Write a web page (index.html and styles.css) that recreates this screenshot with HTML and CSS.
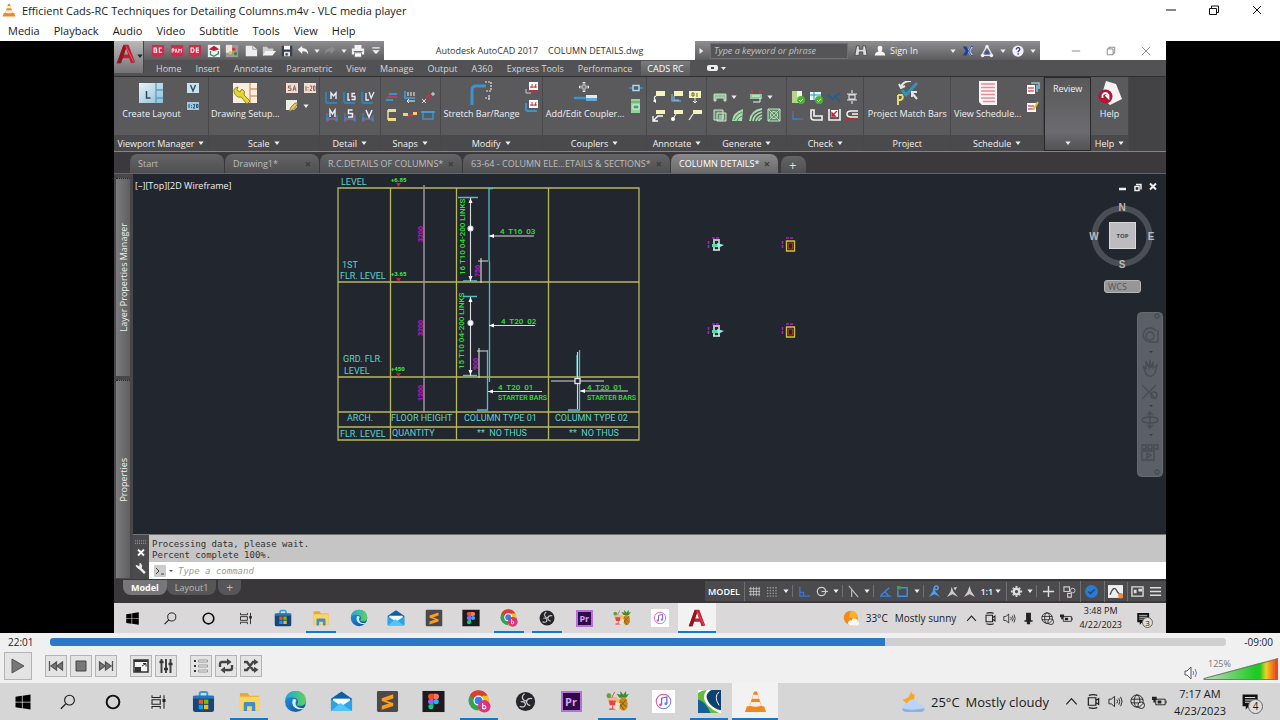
FILE: index.html
```html
<!DOCTYPE html>
<html lang="en">
<head>
<meta charset="utf-8">
<title>Efficient Cads-RC Techniques for Detailing Columns.m4v - VLC media player</title>
<link rel="stylesheet" href="styles.css">
</head>
<body>
<svg class="defs" aria-hidden="true">
  <defs>
    <linearGradient id="gEdge" x1="0" y1="0" x2="1" y2="1"><stop offset="0" stop-color="#1b9de2"/><stop offset=".5" stop-color="#1673c5"/><stop offset="1" stop-color="#0c4a8e"/></linearGradient>
    <linearGradient id="gEdge2" x1="0" y1="0" x2="1" y2="0"><stop offset="0" stop-color="#1fa7dc"/><stop offset="1" stop-color="#5fd35a"/></linearGradient>
    <linearGradient id="gMusic" x1="0" y1="0" x2="1" y2="1"><stop offset="0" stop-color="#f0506e"/><stop offset=".5" stop-color="#b45be0"/><stop offset="1" stop-color="#38a8f0"/></linearGradient>
    <linearGradient id="gSheet" x1="0" y1="0" x2="1" y2="1"><stop offset="0" stop-color="#e6f3f8"/><stop offset="1" stop-color="#8fc0d8"/></linearGradient>
  </defs>
  <symbol id="cone" viewBox="0 0 24 24"><path d="M3 17h18l2 6H1z" fill="#f08a1c"/><path d="M10.500 1.500h3L19 19q-7 3-14 0z" fill="#f4871a"/><path d="M9.500 5h5l1.200 4H8.300zM7.300 12.500h9.400l1.200 4q-5.900 2-11.800 0z" fill="#f3f0ec"/></symbol>
  <symbol id="win" viewBox="0 0 24 24"><path d="M2 5l8.500-1.200v7.700H2zM11.500 3.600L22 2v9.500H11.500zM2 12.500h8.500v7.700L2 19zM11.500 12.500H22V22l-10.500-1.600z"/></symbol>
  <symbol id="search" viewBox="0 0 24 24"><circle cx="14" cy="9.500" r="6.500" fill="none" stroke="currentColor" stroke-width="1.500"/><path d="M9.300 14.200L2.500 21" stroke="currentColor" stroke-width="1.700"/></symbol>
  <symbol id="ring" viewBox="0 0 24 24"><circle cx="12" cy="12" r="8.500" fill="none" stroke="#111" stroke-width="2.600"/></symbol>
  <symbol id="taskview" viewBox="0 0 24 24"><path d="M4 3v3h11V3M4 21v-3h11v3M4 9h11v6H4zM20 3v18" fill="none" stroke="#222" stroke-width="1.400"/><path d="M18 8h4v4h-4z" fill="#222"/></symbol>
  <symbol id="store" viewBox="0 0 24 24"><path d="M8 7V4q0-2 2-2h4q2 0 2 2v3" fill="none" stroke="#2b9fe0" stroke-width="2"/><rect x="1" y="6" width="22" height="17" rx="2.500" fill="#17467d"/><path d="M1 9V6h22v3z" fill="#2377b8"/><path d="M7 10h4.500v4.500H7z" fill="#f25022"/><path d="M12.500 10H17v4.500h-4.500z" fill="#7fba00"/><path d="M7 15.500h4.500V20H7z" fill="#00a4ef"/><path d="M12.500 15.500H17V20h-4.500z" fill="#ffb900"/></symbol>
  <symbol id="folder" viewBox="0 0 24 24"><path d="M2 3h8l2 3h10v15H2z" fill="#e9a92c"/><path d="M2 7h20v14H2z" fill="#fbd568"/><path d="M6 22v-8q0-1.500 1.500-1.500h9q1.500 0 1.500 1.500v8h-3.500v-5h-5v5z" fill="#3f8fc9"/></symbol>
  <symbol id="edge" viewBox="0 0 24 24"><circle cx="12" cy="12" r="11" fill="url(#gEdge)"/><path d="M1.200 10Q3 1 12 1q10 0 11 9.500 0 6-6 6-3.500 0-3.500-1.500c2-2 1.500-6-2-7Q5 6.500 1.200 10z" fill="url(#gEdge2)"/><path d="M9 10q-2 8 6 10 4 .5 6-1.500c-5 1-9-1-9-5q0-1.500 1-2.500-1.500-2.500-4-1z" fill="#dceefa"/></symbol>
  <symbol id="mail" viewBox="0 0 24 24"><path d="M1 9l11-7.500L23 9v12H1z" fill="#0f5ea8"/><path d="M3 9h18v8H3z" fill="#f4faff"/><path d="M1 9.500L12 17l11-7.500V22H1z" fill="#27a5e8"/><path d="M1 22l10-8.500 1 .8L23 22z" fill="#55c3f5"/></symbol>
  <symbol id="sublime" viewBox="0 0 24 24"><rect x="1" y="1" width="22" height="22" rx="1.500" fill="#4a4a4a"/><path d="M6 8.500l12-4v4.300l-7.500 2.400L18 13.500v3.300L6 20.500v-4l7.500-2.500L6 11.500z" fill="#ff9b1a"/></symbol>
  <symbol id="figma" viewBox="0 0 24 24"><rect x="0.500" y="1" width="23" height="22" fill="#1c1c1f"/><path d="M12 4H9a2.700 2.700 0 000 5.400h3z" fill="#f24e1e"/><path d="M12 4h3a2.700 2.700 0 010 5.400h-3z" fill="#ff7262"/><path d="M12 9.400H9a2.700 2.700 0 000 5.400h3z" fill="#a259ff"/><circle cx="14.700" cy="12.100" r="2.700" fill="#1abcfe"/><path d="M12 14.800H9a2.700 2.700 0 103 2.700z" fill="#0acf83"/></symbol>
  <symbol id="chrome" viewBox="0 0 24 24"><circle cx="11" cy="11" r="10.500" fill="#2fa552"/><path d="M2 5.500A10.500 10.500 0 0120.500 6H11q-4 1-4 5z" fill="#e33b2e"/><path d="M20.500 6A10.500 10.500 0 0110.500 21.500L15 12V6z" fill="#fbc116"/><circle cx="11" cy="11" r="5.300" fill="#fff"/><circle cx="11" cy="11" r="4" fill="#3a7de8"/><circle cx="17" cy="17" r="6.500" fill="#d8347c"/><path d="M15.300 13.500v6.500M15.300 17q1.700-1.500 3 0 1 2.500-1.500 2.800l-1.500-.5" fill="none" stroke="#fff" stroke-width="1.100"/></symbol>
  <symbol id="obs" viewBox="0 0 24 24"><circle cx="12" cy="12" r="10" fill="#26262a"/><path d="M11 4q-4 3-1 6.500 2 1.500 4 .5M19 9q-5-1-6 3 .5 4 4 4M6 17q5 2 6-2-1-4-5-2.500" fill="none" stroke="#c9c9cc" stroke-width="1.400"/></symbol>
  <symbol id="fruit" viewBox="0 0 24 24"><path d="M14 8l-3-4 4 1 0-4 3 4 3-4 0 4 3-1-3 4z" fill="#3c8c2c"/><ellipse cx="18" cy="14.500" rx="4.700" ry="7" fill="#c98b1d"/><path d="M14.500 11l7 7M15 17l6-7M14 14l5 7" stroke="#7a4c10" stroke-width=".9"/><path d="M2 8h9l-1 8H4z" fill="#e8443a"/><path d="M1 8h11l-1 3H2z" fill="#f6b2a0"/><circle cx="3" cy="6" r="2.500" fill="#58a83a"/><path d="M6 8L9 2M7 16v4H3.500h7" stroke="#d84a4a" fill="none"/><path d="M10 12l5 2-2 7-4-1z" fill="#e9e3cf"/><circle cx="12" cy="11" r="2" fill="#f2c432"/></symbol>
  <symbol id="music" viewBox="0 0 24 24"><rect width="24" height="24" fill="#fff"/><circle cx="12" cy="12" r="7.600" fill="none" stroke="url(#gMusic)" stroke-width="1.100"/><path d="M10 15.500V8.500l5.500-1.200v7" fill="none" stroke="#7e58d8" stroke-width="1.300"/><circle cx="8.900" cy="15.500" r="1.500" fill="#f0506e"/><circle cx="14.400" cy="14.300" r="1.500" fill="#4a8df0"/></symbol>
  <symbol id="acad" viewBox="0 0 24 24"><path d="M1 23L9 1h6l8 21-5 1-2-6H8l-2 6zM9.500 12.500h5L12 5z" fill="#c01f2f" fill-rule="evenodd"/><path d="M1 23L9 1l3 4-6 18z" fill="#8f1523"/><path d="M12 3l9 18" stroke="#f0606a" fill="none"/></symbol>
  <symbol id="swoosh" viewBox="0 0 24 24"><rect width="24" height="24" fill="#0d416f"/><path d="M0 0h14Q5 5 12 14q5 6 12 7v3H0z" fill="#fff"/><path d="M0 3Q4 0 9 0 3 8 10 16q5 5 12 8H0z" fill="#66bb3c"/><path d="M0 10q8 2 13 14H0z" fill="#155f96"/><path d="M22 2q-6 5 0 14" fill="none" stroke="#fff"/></symbol>
  <symbol id="suncloud" viewBox="0 0 24 24"><circle cx="11" cy="11" r="10" fill="#f08a1a"/><path d="M11 1a10 10 0 0110 10H8z" fill="#fab02c"/><path d="M9 21q-4-3 0-6 2-1 3 0 1-4 5-3t3 4q4 1 2 5-1 1-4 1z" fill="#fbf6f6"/></symbol>
  <symbol id="mooncloud" viewBox="0 0 24 24"><path d="M10 1q0 3 4 4l-1 5-8 4-4-4q8-1 9-9z" fill="#f6a91f"/><path d="M5 23q-5-1-4-5t5-4q2-5 7-4t5 5q6 0 6 4t-4 4z" fill="#b9d4f7"/><path d="M5 23q-5-1-4-4 8 3 23 0 0 4-4 4z" fill="#8ab2ea"/></symbol>
  <symbol id="caret" viewBox="0 0 16 16"><path d="M2.500 11L8 5l5.500 6" fill="none" stroke="#222" stroke-width="1.300"/></symbol>
  <symbol id="cam" viewBox="0 0 16 16"><path d="M3 1.500q5-1.500 9 0M3 14.500q5 1.500 9 0M2.500 4h8v8h-8zM10.500 7l3-2v6l-3-2" fill="none" stroke="#222" stroke-width="1.300"/></symbol>
  <symbol id="spk" viewBox="0 0 16 16"><path d="M1 5.500h2.500L7 2.500v11l-3.500-3H1zM9.500 6q1.200 2 0 4M11.500 4.500q2 3.500 0 7M13.500 3q3 5 0 10" fill="none" stroke="#222"/></symbol>
  <symbol id="mic" viewBox="0 0 16 16"><path d="M5 1h6v9H5zM3 10h10v2H3zM6 12h4v3H6z" fill="#222"/></symbol>
  <symbol id="globe" viewBox="0 0 16 16"><circle cx="7.500" cy="7.500" r="6.500" fill="none" stroke="#222"/><ellipse cx="7.500" cy="7.500" rx="3" ry="6.500" fill="none" stroke="#222"/><path d="M1 5.500h13M1 9.500h13" stroke="#222"/><circle cx="12" cy="12" r="3.500" fill="#ddd" stroke="#222"/><path d="M9.500 14.500l5-5" stroke="#222"/></symbol>
  <symbol id="bat" viewBox="0 0 16 16"><path d="M4 5.500h10v6H4zM15 7v3" fill="none" stroke="#222"/><path d="M6 7h4v3H6zM0 3h5v3.500H3.500V9h-2V6.500H0z" fill="#222"/></symbol>
  <symbol id="note" viewBox="0 0 24 24"><path d="M2 3h19v15H10l-4 4v-4H2z" fill="#111"/><path d="M5 7h13M5 10h13M5 13h8" stroke="#ddd" stroke-width="1.300"/></symbol>
  <symbol id="dn" viewBox="0 0 8 8"><path d="M0.500 2h7L4 6.500z" fill="currentColor"/></symbol>

  <symbol id="q1" viewBox="0 0 16 16"><path d="M1 1h14v13H9l-3 2-1-2H1z" fill="#d8274b"/><path d="M3.500 4.500h2.500v2.500l-1 0 1.500 0v2.500H3.500zM12.500 4.500h-3v5h3" stroke="#fff" stroke-width="1.200" fill="none"/></symbol>
  <symbol id="q2" viewBox="0 0 16 16"><path d="M1 1h14v13H9l-3 2-1-2H1z" fill="#d8274b"/><path d="M2.500 10V5.500h2V8H3M6 10l1-4.500 1.200 4.500M10 10V5.500l1.500 2 1.500-2V10" stroke="#fff" fill="none"/></symbol>
  <symbol id="q3" viewBox="0 0 16 16"><path d="M1 1h14v13H9l-3 2-1-2H1z" fill="#d8274b"/><path d="M3.500 4.500h2.500l1 2.500-1 2.500H3.500zM12.500 4.500h-3v5h3M9.500 7h3" stroke="#fff" stroke-width="1.200" fill="none"/></symbol>
  <symbol id="q4" viewBox="0 0 16 16"><rect x="1" y="1" width="14" height="14" fill="#eef2f0"/><path d="M2 6l6-4 6 4-6 2z" fill="#b5213c"/><path d="M4 8v4l4 2 5-3V8" fill="none" stroke="#3d8a70" stroke-width="1.500"/></symbol>
  <symbol id="q5" viewBox="0 0 16 16"><path d="M1 1h14v14H1z" fill="#9a9a98"/><path d="M1 1h7v9H1z" fill="#e7e7e2"/><circle cx="10" cy="6" r="2" fill="#e0342e"/><circle cx="6" cy="10" r="2" fill="#e8c22a"/><circle cx="12" cy="11" r="2" fill="#2f8a3c"/></symbol>
  <symbol id="new" viewBox="0 0 16 16"><path d="M2 2h8l5 4v8H2z" fill="#eee"/><path d="M10 2v4h5" fill="none" stroke="#999"/></symbol>
  <symbol id="open" viewBox="0 0 16 16"><path d="M1 3h5l1 2h6v3H5l-3 5H1z" fill="#ccc"/><path d="M4 8h12l-4 5H1z" fill="#f2f2f2"/></symbol>
  <symbol id="save" viewBox="0 0 16 16"><path d="M1 1h14v14H1z" fill="#3a3e48"/><path d="M4 1h8v5H4z" fill="#fff"/><path d="M4 9h8v6H4z" fill="#dfe4ee"/><path d="M6 11h3v3H6z" fill="#3a3e48"/></symbol>
  <symbol id="undo" viewBox="0 0 16 16"><path d="M1 6l6-5v3q8 0 8 9-2-5-8-4.500V12z" fill="#f2f2f2"/></symbol>
  <symbol id="redo" viewBox="0 0 16 16"><path d="M15 6L9 1v3q-8 0-8 9 2-5 8-4.500V12z" fill="#8b8b8b"/></symbol>
  <symbol id="print" viewBox="0 0 16 16"><path d="M4 1h8v4H4zM1 5h14v7H1z" fill="#f1f1f1"/><path d="M3 8.500h10" stroke="#555"/><path d="M4 10h8v5H4z" fill="#fff" stroke="#777"/></symbol>
  <symbol id="more" viewBox="0 0 16 16"><path d="M3 3h10v1.800H3zM3 7h10l-5 5z" fill="#f1f1f1"/></symbol>
  <symbol id="binoc" viewBox="0 0 16 16"><path d="M3 2h3v4h4V2h3l2 11h-5V9H6v4H1z" fill="#ddd" stroke="#444"/></symbol>
  <symbol id="user" viewBox="0 0 16 16"><path d="M8 1q4 0 3 5l-1 2.500q5 1 5 5.500H1q0-4.500 5-5.500L5 6Q4 1 8 1z" fill="#f4f4f4"/></symbol>
  <symbol id="exch" viewBox="0 0 16 16"><path d="M15 2h-4L7 8l4 6h4l-4-6z" fill="#a9c0f0"/><path d="M1 2h5l3 6-3 6H1l4-6z" fill="#1f3f9c"/><path d="M15 2h-3L9 8l3 6h3" fill="none" stroke="#1f3f9c"/></symbol>
  <symbol id="a360" viewBox="0 0 16 16"><path d="M8 2L14 13H2z" fill="none" stroke="#dfe6f2" stroke-width="1.500"/><circle cx="8" cy="3" r="2" fill="#eef"/><circle cx="3" cy="13" r="2" fill="#eef"/><circle cx="13" cy="13" r="2" fill="#eef"/><circle cx="8" cy="9.500" r="2" fill="#3352a5"/></symbol>
  <symbol id="help" viewBox="0 0 16 16"><circle cx="8" cy="8" r="7.500" fill="#f2f3fa"/><path d="M5.500 6q.5-2.500 2.700-2.500t2.300 2.200q0 1.300-2.300 3v1M8.200 11v2" fill="none" stroke="#2b3c9c" stroke-width="1.800"/></symbol>

  <symbol id="layout" viewBox="0 0 24 20"><path d="M0 0h24v20H0z" fill="url(#gSheet)"/><path d="M17 0v20M17 7h7M17 15h7" stroke="#5b9dbe" stroke-width="1.300"/><path d="M7.500 8v7h4" fill="none" stroke="#345" stroke-width="1.500"/></symbol>
  <symbol id="setup" viewBox="0 0 24 20"><path d="M0 0h24v20H0z" fill="#fbeedf"/><path d="M17 0v20M17 6h7M17 13h7" stroke="#d59a70" stroke-width="1.300"/><path d="M1 9q-1-4 4-5L4 7l3 2 2-3q4 2 2 6l6 6-3 3-6-7q-5 1-7-5z" fill="#e8d52a" stroke="#77701a" stroke-width=".8"/></symbol>
  <symbol id="vw" viewBox="0 0 14 14"><path d="M1 2h12v10H1z" fill="#c8e2ee"/><path d="M4.500 4L7 10l2.500-6" fill="none" stroke="#334d66" stroke-width="1.400"/></symbol>
  <symbol id="sc20" viewBox="0 0 14 14"><path d="M1 3h12v8H1z" fill="#9fcbe2"/><path d="M3 5v4M5.500 6v.8m0 1v1M7 5.500h1.700V7L7 9h2M10.500 5.500h1.500v3h-1.500z" stroke="#283f55" fill="none" stroke-width=".9"/></symbol>
  <symbol id="sa" viewBox="0 0 14 14"><path d="M1 2h12v10H1z" fill="#f2ddd3"/><path d="M6 5H3.500v2H6v2.500H3M8 10l1.500-5.500L11 10M8.500 8h2" fill="none" stroke="#88665a"/></symbol>
  <symbol id="s20" viewBox="0 0 14 14"><path d="M1 2h12v10H1z" fill="#f2ddd3"/><path d="M3 5v5M5 6v1M5 8.500v1M7 5h1.700v2L7 9.500h2M10.500 5h1.500v4.500h-1.500z" fill="none" stroke="#88665a"/></symbol>
  <symbol id="scl" viewBox="0 0 14 14"><path d="M1 1h11v7l-3 3H1z" fill="#efece4"/><path d="M4 13l2-5 4-4h3l-3 5z" fill="#e7c93c" stroke="#665" stroke-width=".7"/></symbol>
  <symbol id="dA" viewBox="0 0 14 14"><path d="M1 2v9q0 2 2 2h9" fill="none" stroke="#2a86bd" stroke-width="1.800"/><path d="M6 9V3l2.500 3L11 3v6" fill="none" stroke="#eef" stroke-width="1.400"/></symbol>
  <symbol id="dB" viewBox="0 0 14 14"><path d="M1 2v9q0 2 2 2h9" fill="none" stroke="#2a86bd" stroke-width="1.800"/><path d="M5 3v7h2M12 3.500H9v3h3v3H8.500" fill="none" stroke="#eef" stroke-width="1.300"/></symbol>
  <symbol id="dC" viewBox="0 0 14 14"><path d="M1 2v9q0 2 2 2h9" fill="none" stroke="#2a86bd" stroke-width="1.800"/><path d="M5 3v7h3M8 2l2.200 6L13 2" fill="none" stroke="#eef" stroke-width="1.300"/></symbol>
  <symbol id="dD" viewBox="0 0 14 14"><path d="M1 11h12M2 5v9M12 7v7" stroke="#3989bd" stroke-width="1.300"/><path d="M5 9V2l2.500 4L10 2v7" fill="none" stroke="#eef" stroke-width="1.400"/><path d="M3 9l2 2-2 2M11 9l-2 2 2 2" stroke="#d2455c" fill="none"/></symbol>
  <symbol id="dE" viewBox="0 0 14 14"><path d="M1 11h12M2 5v9M12 7v7" stroke="#3989bd" stroke-width="1.300"/><path d="M9.500 2h-4v3.500h4V9H5" fill="none" stroke="#eef" stroke-width="1.500"/><path d="M3 9l2 2-2 2M11 9l-2 2 2 2" stroke="#d2455c" fill="none"/></symbol>
  <symbol id="dF" viewBox="0 0 14 14"><path d="M1 11h12M2 5v9M12 7v7" stroke="#3989bd" stroke-width="1.300"/><path d="M5 2l3 7 3-7" fill="none" stroke="#eef" stroke-width="1.500"/><path d="M3 9l2 2-2 2M11 9l-2 2 2 2" stroke="#d2455c" fill="none"/></symbol>
  <symbol id="n1" viewBox="0 0 14 14"><path d="M4 4h8M1 10h7" stroke="#3c93cc" stroke-width="1.800"/><path d="M2 7h10" stroke="#c4415a" stroke-width="1.500"/></symbol>
  <symbol id="n2" viewBox="0 0 14 14"><path d="M2 1v7h10" fill="none" stroke="#3c93cc" stroke-width="2"/><path d="M5 2v4M8 2v4M11 2v4M4 11h8M6 9l-2 2 2 2" fill="none" stroke="#eee"/></symbol>
  <symbol id="n3" viewBox="0 0 14 14"><path d="M1 9l4 4M5 9l-4 4M10 4h4M12 2v4" stroke="#ddd"/><path d="M5 8l4-4v6" fill="none" stroke="#c4314a" stroke-width="1.500"/></symbol>
  <symbol id="n4" viewBox="0 0 14 14"><path d="M3 1h8v3H3zM3 10h8v3H3z" fill="#f0dc84"/><path d="M3 2v10" stroke="#f0dc84" stroke-width="1.500"/></symbol>
  <symbol id="n5" viewBox="0 0 14 14"><path d="M0 5h5v3H0zM10 4h4v3h-4z" fill="#f0d468"/><path d="M5 8l5-1" stroke="#d4344e" stroke-width="2"/></symbol>
  <symbol id="n6" viewBox="0 0 14 14"><path d="M2 4h10v7H2z" fill="none" stroke="#3c93cc" stroke-width="1.500"/><path d="M0 4h14" fill="none" stroke="#4ba2d8" stroke-width="1.500"/></symbol>
  <symbol id="stretch" viewBox="0 0 24 24"><path d="M2 24V9q0-4 4-4h10" fill="none" stroke="#3b93cf" stroke-width="3"/><path d="M15 1h6v9h-6M15 17h6M19 14v6" fill="none" stroke="#e4e4e4" stroke-width="1.200" stroke-dasharray="2 1"/></symbol>
  <symbol id="m1" viewBox="0 0 14 14"><path d="M4 1h9v8H4z" fill="#fff"/><path d="M7 7V3M10 7l1-4M5 6h7" stroke="#c82a3c"/><path d="M4 9h9v1.500H4z" fill="#c82a3c"/><path d="M1 8v4h5" stroke="#ccc" fill="none"/></symbol>
  <symbol id="m2" viewBox="0 0 14 14"><path d="M4 1h9v8H4z" fill="#fff"/><path d="M7 7V3M10 7l1-4M5 6h7" stroke="#c82a3c"/><path d="M1 4v6q0 2 2 2h9" stroke="#3b93cf" stroke-width="2" fill="none"/></symbol>
  <symbol id="coup" viewBox="0 0 24 24"><path d="M11 1v10M6 6h10" stroke="#eee" stroke-width="2.600"/><path d="M11 2v8M7 6h8" stroke="#555"/><path d="M1 17h14" stroke="#3b93cf" stroke-width="2.500"/><path d="M13 14h11v6H13z" fill="#dcebf4"/><path d="M13 17h11v3H13z" fill="#6ba7cf"/></symbol>
  <symbol id="c1" viewBox="0 0 14 14"><path d="M0 7h14" stroke="#3b93cf" stroke-width="1.500"/><path d="M4 4.500h6v5H4z" fill="#58595b" stroke="#a8d6f0" stroke-width="1.500"/></symbol>
  <symbol id="c2" viewBox="0 0 14 14"><path d="M2 0h9v14H2z" fill="#8fd69a"/><path d="M4 6h6v4H4z" fill="#4e9d66" stroke="#e2f6e4"/><path d="M2 3h9" stroke="#4e9d66"/></symbol>
  <symbol id="a1" viewBox="0 0 14 14"><path d="M4 1h9v5H4z" fill="#f4f3b8"/><path d="M4 6L2.500 7v5" stroke="#eee" stroke-width="1.300" fill="none"/><path d="M1 11l3-2v4z" fill="#fff"/></symbol>
  <symbol id="a2" viewBox="0 0 14 14"><path d="M4 1h9v5H4z" fill="#f4f3b8"/><path d="M2 4v7h9M4 6v4h5" stroke="#7fb4d6" stroke-width="1.200" fill="none"/></symbol>
  <symbol id="a3" viewBox="0 0 14 14"><path d="M1 1h12v7H1z" fill="#f4f3b8"/><path d="M4 3h2v3H4zM9 3v4" stroke="#66661f" fill="none"/><path d="M7 8v5M5 11l2 2 2-2" stroke="#eee" fill="none"/></symbol>
  <symbol id="a4" viewBox="0 0 14 14"><path d="M4 2h9v4H4z" fill="#f4f3b8"/><path d="M11 8H6l-4 4M1 8v5h5" stroke="#fff" fill="none" stroke-width="1.300"/></symbol>
  <symbol id="a5" viewBox="0 0 14 14"><path d="M4 2h9v4H4z" fill="#f4f3b8"/><path d="M6 6l-3 5" stroke="#eee"/><circle cx="3" cy="11" r="2" fill="#fff"/></symbol>
  <symbol id="a6" viewBox="0 0 14 14"><path d="M5 2h9v4H5z" fill="#f4f3b8"/><path d="M5 6l-4 6" stroke="#eee" stroke-width="1.300"/></symbol>
  <symbol id="g1" viewBox="0 0 14 14"><path d="M1 4h12v7h-2V8H3v3H1z" fill="#8fc79b" stroke="#d6eed8" stroke-width=".8"/></symbol>
  <symbol id="g2" viewBox="0 0 14 14"><path d="M1 4h12v5H1z" fill="#8fc79b"/><path d="M3 0v4M11 0v4" stroke="#cf3a46" stroke-width="1.500"/><path d="M3 6h8M4 12h7V8" stroke="#e8f5e9" fill="none"/></symbol>
  <symbol id="g3" viewBox="0 0 14 14"><path d="M1 2h9v10H1zM4 5h9v8H4z" fill="#6b8a70" stroke="#cfe9d2"/><path d="M6 8h5M6 10h5" stroke="#cfe9d2"/></symbol>
  <symbol id="g4" viewBox="0 0 14 14"><path d="M1 13Q2 4 12 1l-1 12z" fill="#a6dcae"/><path d="M3 12q2-6 8-8M6 13q1-4 5-5" stroke="#4e8a5c" fill="none"/></symbol>
  <symbol id="g5" viewBox="0 0 14 14"><path d="M1 13Q2 3 13 1M4 13q1-7 9-9M7 13q1-4 6-6M10 13q0-2 3-3" fill="none" stroke="#a6dcae" stroke-width="1.800"/></symbol>
  <symbol id="g6" viewBox="0 0 14 14"><path d="M1 1h12v12H1z" fill="#5e8a67" stroke="#bfe7c4"/><circle cx="7" cy="7" r="3.500" fill="none" stroke="#cbeecf"/><path d="M1 1l12 12M13 1L1 13" stroke="#bfe7c4" stroke-width=".8"/></symbol>
  <symbol id="k1" viewBox="0 0 14 14"><path d="M1 1h10v12H1z" fill="#eff5e2"/><path d="M1 1h5v12H1z" fill="#b6d48a"/><circle cx="10" cy="10" r="4" fill="#4fb33a"/><path d="M8 10l1.500 1.500L12 9" stroke="#fff" fill="none"/></symbol>
  <symbol id="k2" viewBox="0 0 14 14"><path d="M1 2h11v8H1z" fill="#dff"/><path d="M1 5h11M5 2v8" stroke="#3b88b8"/><circle cx="10" cy="10" r="4" fill="#4fb33a"/><path d="M8 10l1.500 1.500L12 9" stroke="#fff" fill="none"/></symbol>
  <symbol id="k3" viewBox="0 0 14 14"><path d="M1 5l6 5M6 8l7-5M9 7l4 5" stroke="#1f5f92" stroke-width="1.800"/></symbol>
  <symbol id="k4" viewBox="0 0 14 14"><path d="M2 4h10M2 10h10M7 0v3M7 11v3M4 5h6v4H4z" fill="none" stroke="#ddd" stroke-width="1.200"/></symbol>
  <symbol id="k5" viewBox="0 0 14 14"><path d="M2 3v8h10" fill="none" stroke="#2f7fb5" stroke-width="1.800"/><path d="M2 3v4M9 11h4" stroke="#c03a4b"/></symbol>
  <symbol id="k6" viewBox="0 0 14 14"><path d="M2 2h3v6h8v4H5q-3 0-3-3z" fill="none" stroke="#f4f4f4" stroke-width="1.600"/></symbol>
  <symbol id="k7" viewBox="0 0 14 14"><path d="M2 1v11h11V1" fill="none" stroke="#f4f4f4" stroke-width="1.600"/><path d="M4 2h7v7H4z" fill="#fff"/><path d="M5 8V5l3 3zM7 6l3-3" stroke="#c23" stroke-width="1.400"/></symbol>
  <symbol id="k8" viewBox="0 0 14 14"><path d="M13 3H6q-4 0-4 3t4 3h7M13 6H7" fill="none" stroke="#f4f4f4" stroke-width="1.500"/><path d="M4 11h9M1 13l3-3" stroke="#c23" stroke-width="1.400"/></symbol>
  <symbol id="match" viewBox="0 0 24 24"><path d="M3 14v10M3 14h4q2 3-1 5H3" fill="none" stroke="#e3da6a" stroke-width="2"/><path d="M22 2L11 14l-4-5" fill="none" stroke="#2f93bf" stroke-width="3"/><path d="M16 0Q8 0 6 6M4 3l2 4 4-2M22 18l-5-6M17 16v-5h5" fill="none" stroke="#e6e6e6" stroke-width="2"/></symbol>
  <symbol id="sched" viewBox="0 0 24 24"><path d="M3 0h18v24H6l-3-3z" fill="#fbf4f4"/><path d="M5 3h14M5 6.500h14M5 10h14M5 13.500h14M5 17h14M7 20.500h12" stroke="#e58b96" stroke-width="1.700"/></symbol>
  <symbol id="s1" viewBox="0 0 14 14"><path d="M1 4h8v9H1z" fill="#fff"/><path d="M2 7h6M2 10h6" stroke="#d8606d" stroke-width="1.500"/><path d="M5 2h8v6M11 4v7" stroke="#8cc2dd" fill="none" stroke-width="1.500"/></symbol>
  <symbol id="s2" viewBox="0 0 14 14"><path d="M1 4h9v9H1z" fill="#fff"/><path d="M2 7h6M2 10h6" stroke="#d8606d" stroke-width="1.500"/><path d="M12 3l-5 8" stroke="#e4bd51" stroke-width="2"/></symbol>
  <symbol id="helpbig" viewBox="0 0 24 24"><path d="M8 0l10 3 6 15-12 6-9-8z" fill="#f5f2f3"/><circle cx="7.500" cy="15.500" r="7" fill="#b31632"/><path d="M4.500 17v-3q3-4 6 0v3l-3-3" fill="none" stroke="#fff" stroke-width="1.800"/></symbol>

  <symbol id="play" viewBox="0 0 16 16"><path d="M2 1l12 7-12 7z" fill="#777" stroke="#555"/></symbol>
  <symbol id="prev" viewBox="0 0 16 16"><path d="M1.500 3v10M8.500 4v8L3 8zM14.500 4v8L9 8z" fill="#777" stroke="#555" stroke-width="1.300"/></symbol>
  <symbol id="stop" viewBox="0 0 16 16"><path d="M3 3h10v10H3z" fill="#777" stroke="#444"/></symbol>
  <symbol id="next" viewBox="0 0 16 16"><path d="M14.500 3v10M7.500 4v8L13 8zM1.500 4v8L7 8z" fill="#777" stroke="#555" stroke-width="1.300"/></symbol>
  <symbol id="full" viewBox="0 0 16 16"><path d="M1 2h14v12H1z" fill="#f4f4f4" stroke="#333" stroke-width="1.500"/><path d="M1 2h14v2H1zM2 9h6v5H2z" fill="#333"/><path d="M9 8l4-2.500M10 5.500h3v3" fill="none" stroke="#333"/></symbol>
  <symbol id="eq" viewBox="0 0 16 16"><path d="M3.500 1v14M8 1v14M12.500 1v14" stroke="#444" stroke-width="2"/><path d="M1.500 4h4M6 11h4M10.500 6h4" stroke="#333" stroke-width="2.500"/></symbol>
  <symbol id="list" viewBox="0 0 16 16"><path d="M1 3h2M1 8h2M1 13h2" stroke="#333" stroke-width="2"/><path d="M5.500 2h9v2h-9zM5.500 7h9v2h-9zM5.500 12h9v2h-9z" fill="#eee" stroke="#888" stroke-width=".8"/></symbol>
  <symbol id="loop" viewBox="0 0 16 16"><path d="M2 9V6q0-2 2-2h6M14 7v3q0 2-2 2H6" fill="none" stroke="#444" stroke-width="2.400"/><path d="M9 .5L13.500 4 9 7.500zM7 8.500L2.500 12 7 15.500z" fill="#444"/></symbol>
  <symbol id="shuf" viewBox="0 0 16 16"><path d="M1 4h3l6 8h2M1 12h3l6-8h2" fill="none" stroke="#444" stroke-width="2.400"/><path d="M11 1l4.500 3L11 7.200zM11 8.800l4.500 3L11 15z" fill="#444"/></symbol>
</svg>

<header>
  <div class="title-bar">
    <svg class="i14"><use href="#cone"/></svg>
    <h1>Efficient Cads-RC Techniques for Detailing Columns.m4v - VLC media player</h1>
    <div class="win-controls">
      <button aria-label="Minimize"><svg class="i12" viewBox="0 0 12 12"><path d="M1 6h10" stroke="#111"/></svg></button>
      <button aria-label="Restore"><svg class="i12" viewBox="0 0 12 12"><path d="M1.500 4.500h7v6h-7zM3.500 4V2h7v6.500h-2" fill="none" stroke="#111"/></svg></button>
      <button aria-label="Close"><svg class="i12" viewBox="0 0 12 12"><path d="M2 2l8 8M10 2l-8 8" stroke="#111"/></svg></button>
    </div>
  </div>
  <nav class="menu-bar">
    <button>Media</button><button>Playback</button><button>Audio</button><button>Video</button><button>Subtitle</button><button>Tools</button><button>View</button><button>Help</button>
  </nav>
</header>

<main class="video">
  <div class="acad">
    <div class="acad-head">
      <button class="app-button" aria-label="Application menu"><svg class="app-logo"><use href="#acad"/></svg><svg class="arrow dark"><use href="#dn"/></svg></button>
      <div class="acad-head-main">
        <div class="acad-title">
          <div class="qat">
            <svg class="i14"><use href="#q1"/></svg><svg class="i14"><use href="#q2"/></svg><svg class="i14"><use href="#q3"/></svg><svg class="i14"><use href="#q4"/></svg><svg class="i14"><use href="#q5"/></svg><svg class="i14"><use href="#new"/></svg><svg class="i14"><use href="#open"/></svg><svg class="i12"><use href="#save"/></svg><svg class="i12"><use href="#undo"/></svg><svg class="arrow"><use href="#dn"/></svg><svg class="i12"><use href="#redo"/></svg><svg class="arrow"><use href="#dn"/></svg><svg class="i14"><use href="#print"/></svg><svg class="i12"><use href="#more"/></svg>
          </div>
          <div class="doc-name"><span>Autodesk AutoCAD 2017</span><span>COLUMN DETAILS.dwg</span></div>
          <div class="info-center">
            <svg class="arrow side" viewBox="0 0 8 8"><path d="M2 0l5 4-5 4z" fill="#eee"/></svg>
            <input class="keyword" type="text" aria-label="Search help" placeholder="Type a keyword or phrase">
            <svg class="i14"><use href="#binoc"/></svg>
            <button class="sign-in"><svg class="i12"><use href="#user"/></svg>Sign In</button>
            <svg class="arrow"><use href="#dn"/></svg><svg class="i12"><use href="#exch"/></svg><svg class="i14"><use href="#a360"/></svg><svg class="arrow"><use href="#dn"/></svg><svg class="i12 spaced"><use href="#help"/></svg><svg class="arrow"><use href="#dn"/></svg>
          </div>
          <div class="doc-controls">
            <svg class="i10" viewBox="0 0 12 12"><path d="M1 6h10" stroke="#777"/></svg>
            <svg class="i10" viewBox="0 0 12 12"><path d="M1.500 3.500h7v7h-7zM3.500 3.500v-2h7v7h-2" fill="none" stroke="#777"/></svg>
            <svg class="i10" viewBox="0 0 12 12"><path d="M1 1l10 10M11 1L1 11" stroke="#777"/></svg>
          </div>
        </div>
        <nav class="ribbon-tabs">
          <button>Home</button><button>Insert</button><button>Annotate</button><button>Parametric</button><button>View</button><button>Manage</button><button>Output</button><button>A360</button><button>Express Tools</button><button>Performance</button><button class="current">CADS RC</button>
          <svg class="ribbon-toggle" viewBox="0 0 20 8"><rect x="1" y="1" width="11" height="6" rx="2" fill="#eee"/><path d="M5 4h3" stroke="#444" stroke-width="2"/><path d="M15 3h5l-2.500 3z" fill="#eee"/></svg>
        </nav>
      </div>
    </div>

    <div class="ribbon">
      <section class="panel"><div class="tools">
        <button class="big"><svg><use href="#layout"/></svg>Create Layout</button>
        <div class="side-icons"><svg class="i14"><use href="#vw"/></svg><svg class="i14"><use href="#sc20"/></svg></div>
      </div><h2>Viewport Manager<svg class="arrow"><use href="#dn"/></svg></h2></section>
      <section class="panel"><div class="tools">
        <button class="big"><svg><use href="#setup"/></svg>Drawing Setup...</button>
        <div class="side-icons two"><svg class="i14"><use href="#sa"/></svg><svg class="i14"><use href="#s20"/></svg><svg class="i14"><use href="#scl"/></svg><svg class="arrow"><use href="#dn"/></svg></div>
      </div><h2>Scale<svg class="arrow"><use href="#dn"/></svg></h2></section>
      <section class="panel"><div class="tools small three">
        <svg class="i14"><use href="#dA"/></svg><svg class="i14"><use href="#dB"/></svg><svg class="i14"><use href="#dC"/></svg><svg class="i14"><use href="#dD"/></svg><svg class="i14"><use href="#dE"/></svg><svg class="i14"><use href="#dF"/></svg>
      </div><h2>Detail<svg class="arrow"><use href="#dn"/></svg></h2></section>
      <section class="panel"><div class="tools small three">
        <svg class="i14"><use href="#n1"/></svg><svg class="i14"><use href="#n2"/></svg><svg class="i14"><use href="#n3"/></svg><svg class="i14"><use href="#n4"/></svg><svg class="i14"><use href="#n5"/></svg><svg class="i14"><use href="#n6"/></svg>
      </div><h2>Snaps<svg class="arrow"><use href="#dn"/></svg></h2></section>
      <section class="panel"><div class="tools">
        <button class="big"><svg><use href="#stretch"/></svg>Stretch Bar/Range</button>
        <div class="side-icons"><svg class="i14"><use href="#m1"/></svg><svg class="i14"><use href="#m2"/></svg></div>
      </div><h2>Modify<svg class="arrow"><use href="#dn"/></svg></h2></section>
      <section class="panel"><div class="tools">
        <button class="big"><svg><use href="#coup"/></svg>Add/Edit Coupler...</button>
        <div class="side-icons"><svg class="i14"><use href="#c1"/></svg><svg class="i14"><use href="#c2"/></svg></div>
      </div><h2>Couplers<svg class="arrow"><use href="#dn"/></svg></h2></section>
      <section class="panel"><div class="tools small three">
        <svg class="i14"><use href="#a1"/></svg><svg class="i14"><use href="#a2"/></svg><svg class="i14"><use href="#a3"/></svg><svg class="i14"><use href="#a4"/></svg><svg class="i14"><use href="#a5"/></svg><svg class="i14"><use href="#a6"/></svg>
      </div><h2>Annotate<svg class="arrow"><use href="#dn"/></svg></h2></section>
      <section class="panel"><div class="tools small four">
        <svg class="i14"><use href="#g1"/></svg><svg class="arrow"><use href="#dn"/></svg><svg class="i14"><use href="#g2"/></svg><svg class="arrow"><use href="#dn"/></svg><svg class="i14"><use href="#g3"/></svg><svg class="i14"><use href="#g4"/></svg><svg class="i14"><use href="#g5"/></svg><svg class="i14"><use href="#g6"/></svg>
      </div><h2>Generate<svg class="arrow"><use href="#dn"/></svg></h2></section>
      <section class="panel"><div class="tools small four">
        <svg class="i14"><use href="#k1"/></svg><svg class="i14"><use href="#k2"/></svg><svg class="i14"><use href="#k3"/></svg><svg class="i14"><use href="#k4"/></svg><svg class="i14"><use href="#k5"/></svg><svg class="i14"><use href="#k6"/></svg><svg class="i14"><use href="#k7"/></svg><svg class="i14"><use href="#k8"/></svg>
      </div><h2>Check<svg class="arrow"><use href="#dn"/></svg></h2></section>
      <section class="panel"><div class="tools">
        <button class="big"><svg><use href="#match"/></svg>Project Match Bars</button>
      </div><h2>Project</h2></section>
      <section class="panel"><div class="tools">
        <button class="big"><svg><use href="#sched"/></svg>View Schedule...</button>
        <div class="side-icons"><svg class="i14"><use href="#s1"/></svg><svg class="i14"><use href="#s2"/></svg></div>
      </div><h2>Schedule<svg class="arrow"><use href="#dn"/></svg></h2></section>
      <section class="panel review"><button>Review</button><svg class="arrow"><use href="#dn"/></svg></section>
      <section class="panel"><div class="tools">
        <button class="big"><svg><use href="#helpbig"/></svg>Help</button>
      </div><h2>Help<svg class="arrow"><use href="#dn"/></svg></h2></section>
      <div class="ribbon-rest"></div>
    </div>

    <nav class="file-tabs">
      <button class="t-start">Start</button>
      <button class="t-drawing">Drawing1*<span>×</span></button>
      <button class="t-rc">R.C.DETAILS OF COLUMNS*<span>×</span></button>
      <button class="t-ele">63-64 - COLUMN ELE...ETAILS &amp; SECTIONS*<span>×</span></button>
      <button class="t-col current">COLUMN DETAILS*<span>×</span></button>
      <button class="t-add" aria-label="New drawing">+</button>
    </nav>

    <div class="workspace">
      <aside class="rail">
        <div><span>Layer Properties Manager</span></div>
        <div><span>Properties</span></div>
      </aside>
      <div class="work-main">
        <div class="canvas">
          <svg class="drawing" viewBox="133 174 720 360">
            <g fill="none" stroke="#b9b75e" stroke-width="1.300">
              <path d="M338 188h301v252H338zM338 282h301M338 377h301M338 412h301M338 427h301M390.500 188v252M456.500 188v252M548.500 188v252"/>
            </g>
            <path d="M424 185v228" stroke="#9c93a2" stroke-width="1.500"/>
            <g fill="none" stroke="#54bfc3" stroke-width="1.300">
              <path d="M493 188.500h-4V260l.5 2v120M487.500 350v60H477M458 197.500h20M463 281h14M463 296.500h14M463 375.500h14M577 355v22M579.500 350v60H568"/>
            </g>
            <g stroke="#dcdce0" fill="#fff" stroke-width="1.100">
              <path d="M470.500 198v83M470.500 297v79M489 236h45M489 325.500h46M488 391.500h54M580 391h48M481 258v25M478 261h10M479 348v30M477 351h10" fill="none"/>
              <path d="M468.500 203l2-5 2 5zM468.500 276l2 5 2-5zM468.500 302l2-5 2 5zM468.500 370l2 5 2-5zM494 234l-5 2 5 2zM494 323.500l-5 2 5 2zM493 389.500l-5 2 5 2zM585 389l-5 2 5 2z" stroke="none"/>
              <circle cx="470.500" cy="228.500" r="2.500"/><circle cx="470.500" cy="323" r="2.500"/>
            </g>
            <path d="M551 381h53M577.500 352v57" stroke="#d7d9dc" stroke-width="1.100"/><rect x="575" y="378.500" width="5" height="5" fill="#22262f" stroke="#e8e8e8" stroke-width="1.300"/>
            <path d="M396 183h5l-2.500 4zM396 278h5l-2.500 4zM396 373h5l-2.500 4z" fill="#c2262d"/>
            <g class="cad cyan">
              <text x="341" y="185">LEVEL</text><text x="342" y="268">1ST</text><text x="340" y="279">FLR. LEVEL</text><text x="343" y="362">GRD. FLR.</text><text x="344" y="374">LEVEL</text>
              <text x="347" y="421">ARCH.</text><text x="391" y="421">FLOOR HEIGHT</text><text x="464" y="421">COLUMN TYPE 01</text><text x="555" y="421">COLUMN TYPE 02</text>
              <text x="340" y="437">FLR. LEVEL</text><text x="392" y="436">QUANTITY</text><text x="477" y="436">**&#160; NO THUS</text><text x="569" y="436">**&#160; NO THUS</text>
            </g>
            <g class="cad green">
              <text x="500" y="234">4&#160; T16&#160; 03</text><text x="501" y="324">4&#160; T20&#160; 02</text><text x="498" y="390">4&#160; T20&#160; 01</text><text x="587" y="390">4&#160; T20&#160; 01</text>
              <text transform="translate(465 275) rotate(-90)">16 T10 04-200 LINKS</text><text transform="translate(464 369) rotate(-90)">15 T10 04-200 LINKS</text>
            </g>
            <g class="cad starter"><text x="498" y="400">STARTER BARS</text><text x="587" y="400">STARTER BARS</text></g>
            <g class="cad level"><text x="391" y="182">+6.85</text><text x="391" y="276">+3.65</text><text x="391" y="371">+450</text></g>
            <g class="cad dim">
              <text transform="translate(423 242) rotate(-90)">3200</text><text transform="translate(423 336) rotate(-90)">3200</text><text transform="translate(423 401) rotate(-90)">1200</text><text transform="translate(480 277) rotate(-90)">750</text><text transform="translate(478 370) rotate(-90)">900</text>
            </g>
            <g id="sections">
              <path d="M712 238h8M708.500 241v8M786 238h8M782.500 241v8" stroke="#b21cc0" stroke-width="1.500" stroke-dasharray="3 1"/>
              <path d="M713 240h7M713 250h7M714 241v3M719 241v3M714 247v3M719 247v3" stroke="#d8f3ea" stroke-width="1.500"/><path d="M712 244h8v3h-8z" fill="#4ee0a2"/><path d="M717 243l7 2-6 3z" fill="#9fe6f0"/>
              <path d="M786.500 241h8v10h-8z" fill="none" stroke="#d0c33c" stroke-width="1.300"/><path d="M788.500 243h4v6h-4z" fill="none" stroke="#b5412c" stroke-width=".8"/>
            </g>
            <use href="#sections" y="86"/>
          </svg>
          <span class="view-label">[–][Top][2D Wireframe]</span>
          <div class="view-tools">
            <svg class="view-nav" viewBox="1080 174 86 360">
              <path d="M1119 189h7" stroke="#eee" stroke-width="2.500"/><path d="M1135 186.500h4v4h-4zM1136 184.500h5v5" fill="none" stroke="#eee" stroke-width="1.500"/><path d="M1150 183.500l6 6M1156 183.500l-6 6" stroke="#eee" stroke-width="2"/>
              <circle cx="1122" cy="236" r="27.500" fill="none" stroke="#4b4e55" stroke-width="6"/>
              <rect x="1109.500" y="222.500" width="26" height="26" fill="#bcbcc0" stroke="#d8d8d8"/><text class="cube" x="1122.500" y="238" text-anchor="middle">TOP</text>
              <g class="compass" text-anchor="middle"><text x="1122" y="211">N</text><text x="1122" y="268">S</text><text x="1094" y="240">W</text><text x="1151" y="240">E</text></g>
              <rect x="1137.500" y="312.500" width="25" height="164" rx="4" fill="#5b5f66" stroke="#666a70"/>
              <g fill="none" stroke="#474b52" stroke-width="1.300"><circle cx="1150" cy="336" r="4"/><path d="M1158 330v12h-8a7 7 0 116-11M1143 366l3 8q5 5 9-1l2-8-4 3v-6l-2 6-1-8-1 8-3-7v8zM1142 385l14 14M1156 385l-14 14"/><circle cx="1154" cy="395" r="3"/><path d="M1150 412v16M1147 415l3-3 3 3M1147 425l3 3 3-3"/><ellipse cx="1150" cy="420" rx="8" ry="3"/><path d="M1142 445h4v4h-4zM1148 445h4v4h-4zM1154 445h4v4h-4zM1142 451h12v9h-12zM1147 453l4 2-4 3z"/><circle cx="1157" cy="316" r="2"/><circle cx="1157" cy="472" r="2"/></g>
              <path d="M1149 351h4l-2 2zM1149 405h4l-2 2zM1149 434h4l-2 2z" fill="#34383f"/>
            </svg>
            <button class="wcs">WCS</button>
          </div>
        </div>
        <div class="command">
          <div class="command-grip"><svg viewBox="0 0 16 45"><path d="M2 6h12M2 8.500h12" stroke="#aaa" stroke-dasharray="1 1"/><path d="M5 15l6 6M11 15l-6 6" stroke="#fff" stroke-width="2"/><path d="M6 33l6 6" stroke="#eee" stroke-width="2.500"/><path d="M3 31q1 4 5 3 2-3-1-5v3H5z" fill="#eee" stroke="#eee"/></svg></div>
          <div class="command-body">
            <p>Processing data, please wait.<br>Percent complete 100%.</p>
            <label class="prompt"><svg class="prompt-icon" viewBox="0 0 20 12"><rect x="0" y="0" width="12" height="12" rx="1" fill="#ccc"/><path d="M2 3l3 3-3 3M7 9h3" fill="none" stroke="#444"/><path d="M15 5h4l-2 2z" fill="#555"/></svg><input type="text" aria-label="Command" placeholder="Type a command"></label>
          </div>
        </div>
      </div>
    </div>

    <div class="acad-foot">
      <nav class="layout-tabs"><button class="current">Model</button><button>Layout1</button><button class="plus" aria-label="New layout">+</button></nav>
      <div class="status-bar">
        <button class="w-model">MODEL</button>
        <svg class="w-m line-left" viewBox="0 0 14 14"><path d="M3 2v10M6 2v10M9 2v10M12 2v10M1 4h12M1 7h12M1 10h12" stroke="#c4c4c4" stroke-width=".9"/></svg>
        <svg class="w-m" viewBox="0 0 14 14"><path d="M1 3h12M1 6h12M1 9h12M1 12h12" stroke="#999" stroke-width="1.500" stroke-dasharray="1.500 1.500"/></svg>
        <svg class="arrow line"><use href="#dn"/></svg>
        <svg class="w-m" viewBox="0 0 14 14"><path d="M2 2v10h11M2 8h4v4" fill="none" stroke="#3a76d0" stroke-width="1.400"/></svg>
        <svg class="w-m" viewBox="0 0 14 14"><circle cx="7" cy="7" r="4.500" fill="none" stroke="#ccc" stroke-width="1.300"/><path d="M7 7h7" stroke="#ccc" stroke-width="1.300"/></svg>
        <svg class="arrow line"><use href="#dn"/></svg>
        <svg class="w-m" viewBox="0 0 14 14"><path d="M2 1l10 12M5 4v9" stroke="#bbb" stroke-width="1.300"/></svg>
        <svg class="arrow line"><use href="#dn"/></svg>
        <svg class="w-m" viewBox="0 0 14 14"><path d="M1 12h12M2 11l9-8M6 7l4 4" fill="none" stroke="#3a86e0" stroke-width="1.500"/></svg>
        <svg class="w-m" viewBox="0 0 14 14"><path d="M4 3h8v9H2V6" fill="none" stroke="#4190e6" stroke-width="1.600"/><path d="M1 1h4v4H1z" fill="#3f9d5b"/></svg>
        <svg class="arrow line"><use href="#dn"/></svg>
        <svg class="w-m" viewBox="0 0 14 14"><path d="M6 2l2 5 5 6-6-3-6 3 4-6z" fill="#4e9df0"/><circle cx="9" cy="3" r="2" fill="none" stroke="#4e9df0" stroke-width="1.500"/></svg>
        <svg class="w-m" viewBox="0 0 14 14"><path d="M6 2l2 5 5 6-6-3-6 3 4-6zM8 3l4-1-2 4z" fill="#ccc"/></svg>
        <svg class="w-m" viewBox="0 0 14 14"><path d="M7 1l2 6 4 6-6-3-6 3 4-6z" fill="#ccc"/></svg>
        <button class="w-ratio">1:1<svg class="arrow"><use href="#dn"/></svg></button>
        <svg class="w-m line-left" viewBox="0 0 14 14"><circle cx="7" cy="7" r="3" fill="none" stroke="#ddd" stroke-width="2.500"/><path d="M7 1v2M7 11v2M1 7h2M11 7h2M3 3l1 1M10 10l1 1M11 3l-1 1M4 10l-1 1" stroke="#ddd" stroke-width="2"/></svg>
        <svg class="arrow line"><use href="#dn"/></svg>
        <svg class="w-m" viewBox="0 0 14 14"><path d="M7 1v12M1 7h12" stroke="#ddd" stroke-width="1.500"/></svg>
        <svg class="w-m line-left" viewBox="0 0 14 14"><path d="M1 2h6v5H1zM5 9h4v4H5z" fill="none" stroke="#ccc" stroke-width="1.200"/><circle cx="10.500" cy="6" r="2.500" fill="none" stroke="#ccc"/></svg>
        <svg class="w-l line-left" viewBox="0 0 14 14"><circle cx="7" cy="7" r="6" fill="#2e7ad0"/><path d="M4 7l2 2 4-4" fill="none" stroke="#174b8b" stroke-width="1.500"/></svg>
        <svg class="w-l line-left" viewBox="0 0 14 14"><path d="M0 1h14v12H0z" fill="#eee"/><path d="M2 10q3-9 6-4 2 4 4 3" fill="none" stroke="#555" stroke-width="1.300"/><circle cx="12" cy="11" r="2.500" fill="#f08a3a"/></svg>
        <svg class="w-m line-left" viewBox="0 0 14 14"><path d="M1 2h12v10H1z" fill="none" stroke="#ddd" stroke-width="1.500"/><path d="M3 5h3v4H3zM8 4h4v3H8z" fill="#ddd"/></svg>
        <svg class="w-m" viewBox="0 0 14 14"><path d="M1 3h12M1 7h12M1 11h12" stroke="#ddd" stroke-width="1.500"/></svg>
      </div>
    </div>

    <div class="taskbar inner">
      <div class="apps">
        <button aria-label="Start"><svg><use href="#win"/></svg></button><button aria-label="Search"><svg><use href="#search"/></svg></button><button aria-label="Cortana"><svg><use href="#ring"/></svg></button><button aria-label="Task view"><svg><use href="#taskview"/></svg></button><button aria-label="Store"><svg><use href="#store"/></svg></button><button class="open" aria-label="File Explorer"><svg><use href="#folder"/></svg></button><button aria-label="Edge"><svg><use href="#edge"/></svg></button><button aria-label="Mail"><svg><use href="#mail"/></svg></button><button aria-label="Sublime Text"><svg><use href="#sublime"/></svg></button><button aria-label="Figma"><svg><use href="#figma"/></svg></button><button class="open" aria-label="Chrome"><svg><use href="#chrome"/></svg></button><button class="open" aria-label="OBS"><svg><use href="#obs"/></svg></button><button><span class="pr">Pr</span></button><button aria-label="Game"><svg><use href="#fruit"/></svg></button><button aria-label="iTunes"><svg><use href="#music"/></svg></button><button class="active" aria-label="AutoCAD"><svg><use href="#acad"/></svg></button>
      </div>
      <div class="tray">
        <button class="weather"><svg><use href="#suncloud"/></svg><span>33°C</span><span>Mostly sunny</span></button>
        <svg class="ti"><use href="#caret"/></svg><svg class="ti"><use href="#cam"/></svg><svg class="ti"><use href="#spk"/></svg><svg class="ti"><use href="#mic"/></svg><svg class="ti"><use href="#globe"/></svg><svg class="ti"><use href="#bat"/></svg>
        <time>3:48 PM<br>4/22/2023</time>
        <div class="notes"><svg><use href="#note"/></svg><span>3</span></div>
      </div>
    </div>
  </div>
</main>

<section class="player">
  <div class="seek"><span>22:01</span><input type="range" aria-label="Seek" min="0" max="100" value="71"><span class="left">-09:00</span></div>
  <div class="controls">
    <button class="play" aria-label="Play"><svg><use href="#play"/></svg></button>
    <div class="group"><button aria-label="Previous"><svg><use href="#prev"/></svg></button><button aria-label="Stop"><svg><use href="#stop"/></svg></button><button aria-label="Next"><svg><use href="#next"/></svg></button></div>
    <div class="group"><button aria-label="Fullscreen"><svg><use href="#full"/></svg></button><button aria-label="Extended settings"><svg><use href="#eq"/></svg></button></div>
    <div class="group"><button aria-label="Playlist"><svg><use href="#list"/></svg></button><button aria-label="Loop"><svg><use href="#loop"/></svg></button><button aria-label="Random"><svg><use href="#shuf"/></svg></button></div>
    <div class="volume">
      <svg class="vol-icon" viewBox="0 0 14 14"><path d="M1 5h2l4-4v12L3 9H1z" fill="#fff" stroke="#555"/><path d="M9 5q1.500 2 0 4M11 3q3 4 0 8" fill="none" stroke="#5b87b8"/></svg>
      <div class="vol-meter"><input id="volume" type="range" min="0" max="125" value="125"><label for="volume">125%</label><svg class="vol-edge" viewBox="0 0 75 22"><path d="M1 20.500L74.500 1v20.500H1z" fill="none" stroke="#777"/></svg></div>
    </div>
  </div>
</section>

<footer class="taskbar outer">
  <div class="apps">
    <button aria-label="Start"><svg><use href="#win"/></svg></button><button aria-label="Search"><svg><use href="#search"/></svg></button><button aria-label="Cortana"><svg><use href="#ring"/></svg></button><button aria-label="Task view"><svg><use href="#taskview"/></svg></button><button aria-label="Store"><svg><use href="#store"/></svg></button><button class="open" aria-label="File Explorer"><svg><use href="#folder"/></svg></button><button aria-label="Edge"><svg><use href="#edge"/></svg></button><button aria-label="Mail"><svg><use href="#mail"/></svg></button><button aria-label="Sublime Text"><svg><use href="#sublime"/></svg></button><button aria-label="Figma"><svg><use href="#figma"/></svg></button><button class="open" aria-label="Chrome"><svg><use href="#chrome"/></svg></button><button aria-label="OBS"><svg><use href="#obs"/></svg></button><button><span class="pr">Pr</span></button><button class="open" aria-label="Game"><svg><use href="#fruit"/></svg></button><button aria-label="iTunes"><svg><use href="#music"/></svg></button><button class="open" aria-label="Project"><svg><use href="#swoosh"/></svg></button><button class="active" aria-label="VLC"><svg><use href="#cone"/></svg></button>
  </div>
  <div class="tray">
    <button class="weather"><svg><use href="#mooncloud"/></svg><span>25°C</span><span>Mostly cloudy</span></button>
    <svg class="ti"><use href="#caret"/></svg><svg class="ti"><use href="#cam"/></svg><svg class="ti"><use href="#spk"/></svg><svg class="ti"><use href="#globe"/></svg><svg class="ti"><use href="#bat"/></svg>
    <time>7:17 AM<br>4/23/2023</time>
    <div class="notes"><svg><use href="#note"/></svg><span>4</span></div>
  </div>
</footer>
</body>
</html>
```
FILE: styles.css
```css
* { box-sizing: border-box; }
body { margin: 0; min-height: 100vh; display: flex; flex-direction: column; font-family: "Open Sans", "Noto Sans", sans-serif; font-size: 11px; color: #1a1a1a; background: #fff; }
button { font: inherit; color: inherit; background: none; border: 0; padding: 0; margin: 0; white-space: nowrap; }
input { font: inherit; border: 0; padding: 0; margin: 0; min-width: 0; }
h1, h2, p { margin: 0; font-weight: 400; font-size: inherit; white-space: nowrap; }
svg { display: block; flex: none; }
.defs { position: absolute; width: 0; height: 0; }
.i10 { width: 10px; height: 10px; }
.i12 { width: 12px; height: 12px; }
.i14 { width: 14px; height: 14px; }
.arrow { width: 6px; height: 6px; color: #eee; }

/* player window */
.title-bar { display: flex; align-items: center; gap: 6px; height: 22px; padding: 0 17px 2px 2px; }
.win-controls { margin-left: auto; display: flex; gap: 31px; }
.menu-bar { display: flex; align-items: center; gap: 14px; height: 19px; padding: 0 8px 2px; }

/* video */
.video { flex: 1; display: flex; background: #000; padding: 0 114px; }
.acad { flex: 1; min-width: 0; display: flex; flex-direction: column; font-size: 9px; color: #f0f0f0; background: #3b393c; }
.acad-head { display: flex; height: 35px; background: #525254; }
.app-button { flex: none; width: 30px; height: 32px; display: flex; align-items: flex-start; gap: 1px; padding: 2px; background: linear-gradient(#b9b9b9, #747476); border-right: 1px solid #444; }
.app-logo { width: 20px; height: 22px; }
.app-button .arrow { margin-top: 10px; }
.app-button .dark { color: #222; }
.acad-head-main { flex: 1; min-width: 0; }
.acad-title { display: flex; height: 19px; background: linear-gradient(#8e8e90, #5c5c5e); }
.qat { flex: none; width: 240px; display: flex; align-items: center; justify-content: space-between; padding: 0 2px 0 7px; }
.doc-name { flex: 1; display: flex; align-items: center; justify-content: center; gap: 10px; background: #fff; color: #333; }
.info-center { flex: none; width: 345px; display: flex; align-items: center; justify-content: space-between; gap: 4px; padding: 0 4px 0 3px; }
.keyword { width: 138px; height: 16px; padding: 0 3px; background: #555557; border: 1px solid #707072; color: #ddd; font-style: italic; }
.keyword::placeholder { color: #c2c2c2; }
.sign-in { display: flex; align-items: center; gap: 4px; margin-right: 26px; }
.doc-controls { flex: none; width: 126px; display: flex; align-items: center; justify-content: space-between; padding: 0 15px 0 31px; background: #fff; }
.ribbon-tabs { display: flex; align-items: flex-end; height: 16px; padding-left: 5px; color: #d6d6d6; }
.ribbon-tabs button { height: 15px; padding: 0 7px; }
.ribbon-tabs .current { color: #fff; background: linear-gradient(#7b7b7d, #5b5b5d); padding: 0 6px; margin: 0 6px 0 2px; }
.ribbon-toggle { width: 20px; height: 8px; align-self: center; margin-left: 10px; }

.ribbon { display: grid; grid-template-columns: 95fr 111fr 61fr 60fr 102fr 105fr 60fr 80fr 77fr 87fr 93fr 47fr 38fr 37fr; height: 76px; border-top: 1px solid #2e2e30; border-bottom: 1px solid #858587; background: #5a5a5c; }
.panel { min-width: 0; display: flex; flex-direction: column; border-right: 1px solid #48484a; }
.tools { flex: 1; display: flex; justify-content: center; gap: 5px; padding-top: 4px; }
.big { display: flex; flex-direction: column; align-items: center; height: 40px; line-height: 14px; }
.big svg { width: 24px; height: 24px; margin-bottom: 2px; }
.side-icons { display: grid; align-content: start; gap: 4px; }
.side-icons.two { grid-template-columns: 14px 14px; align-items: center; }
.small { display: grid; justify-content: center; align-content: start; gap: 4px; padding-top: 13px; align-items: center; }
.three { grid-template-columns: 14px 14px 14px; }
.four { grid-template-columns: 14px 14px 14px 14px; }
.panel h2 { display: flex; align-items: center; justify-content: center; gap: 4px; height: 16px; background: #4a4a4c; }
.review { align-items: center; justify-content: space-between; padding: 4px 0; background: linear-gradient(#58585a, #6c6c70 75%, #525255); border: 1px solid #29292b; }
.ribbon-rest { background: #434345; }

.file-tabs { display: flex; align-items: flex-end; height: 22px; padding-left: 15px; background: #3b393c; border-bottom: 1px solid #66626a; }
.file-tabs button { height: 19px; display: flex; align-items: center; justify-content: space-between; padding: 0 8px; color: #bdbdbd; background: linear-gradient(#646466, #505052); border-radius: 8px 8px 0 0; border-left: 1px solid #39393b; }
.file-tabs span { color: #39393b; font-size: 11px; font-weight: 700; }
.file-tabs .current { color: #fff; background: linear-gradient(#8a8a8c, #6a6a6c); }
.t-start { width: 95px; }
.t-drawing { width: 95px; }
.t-rc { width: 143px; }
.t-ele { width: 208px; }
.t-col { width: 108px; }
.file-tabs .t-add { width: 26px; height: 17px; font-size: 13px; color: #ddd; margin-left: 2px; }

.workspace { flex: 1; display: flex; }
.rail { flex: none; width: 19px; display: flex; flex-direction: column; gap: 4px; padding: 4px 3px 1px 2px; background: #47474a; }
.rail div { flex: 1; display: flex; align-items: center; justify-content: center; background: linear-gradient(90deg, #7c7c7e, #5f5f61); border-top: 1px dotted #222; }
.rail span { writing-mode: vertical-rl; transform: rotate(180deg); white-space: nowrap; }
.work-main { flex: 1; min-width: 0; display: flex; flex-direction: column; }
.canvas { position: relative; flex: 1; min-height: 360px; background: #22262f; overflow: hidden; }
.drawing { position: absolute; left: 0; top: 0; width: 720px; height: 360px; }
.view-label { position: absolute; left: 2px; top: 6px; line-height: 12px; }
.view-tools { position: absolute; right: 0; top: 0; width: 86px; height: 360px; }
.view-nav { width: 86px; height: 360px; }
.wcs { position: absolute; left: 24px; top: 106px; width: 37px; height: 13px; text-align: left; padding-left: 3px; line-height: 11px; color: #56575a; background: #97979b; border: 1px solid #b6b6b8; border-radius: 3px; }
.cube { font: 700 6px "Open Sans", sans-serif; fill: #444; }
.compass { font: 700 10px "Liberation Sans", sans-serif; fill: #b8babf; }
.cad { font: 400 9px Roboto, sans-serif; }
.cyan { fill: #5fd3c8; }
.green { fill: #35e03a; font-size: 8px; font-weight: 500; }
.starter { fill: #35e03a; font-size: 7px; font-weight: 500; }
.level { fill: #3df03d; font-size: 6px; font-weight: 700; }
.dim { fill: #c414cc; font-size: 7px; font-weight: 700; }

.command { display: flex; height: 45px; padding-top: 1px; background: #747476; }
.command-grip { width: 16px; background: #4b4b4d; }
.command-grip svg { width: 16px; height: 44px; }
.command-body { flex: 1; display: flex; flex-direction: column; font-family: "DejaVu Sans Mono", monospace; color: #333; }
.command-body p { flex: 1; padding: 4px 3px 0; line-height: 11px; background: #c5c5c6; }
.prompt { display: flex; align-items: center; gap: 4px; height: 17px; padding-left: 5px; background: #fff; }
.prompt-icon { width: 20px; height: 12px; }
.prompt input { flex: 1; font-style: italic; background: none; }
.prompt input::placeholder { color: #9a9a9a; }

.acad-foot { display: flex; justify-content: space-between; height: 24px; padding-top: 1px; background: #39373a; }
.layout-tabs { display: flex; padding-left: 9px; }
.layout-tabs button { height: 15px; padding: 0 8px; color: #bbb; background: #565658; border-radius: 0 0 8px 8px; }
.layout-tabs .current { color: #fff; font-weight: 700; background: #777779; }
.layout-tabs .plus { font-size: 12px; line-height: 12px; margin-left: 2px; }
.status-bar { display: flex; align-items: center; justify-content: space-between; width: 461px; height: 20px; margin-top: 1px; padding: 0 4px 0 3px; background: #4b4b4d; }
.w-model { font-weight: 600; color: #fff; }
.w-m { width: 13px; height: 13px; }
.w-l { width: 15px; height: 15px; }
.w-ratio { display: flex; align-items: center; gap: 2px; font-weight: 600; }
.line, .line-left { box-sizing: content-box; padding-block: 3px; }
.line { padding-right: 3px; border-right: 1px solid #707073; }
.line-left { padding-left: 3px; border-left: 1px solid #707073; }

/* taskbars */
.taskbar { display: flex; justify-content: space-between; color: #1a1a1a; }
.apps { display: grid; }
.apps button { position: relative; display: flex; align-items: center; justify-content: center; }
.apps .open::after, .apps .active::after { content: ""; position: absolute; left: 4px; right: 4px; bottom: 0; height: 2px; background: #1478cc; }
.apps .active::after { left: 0; right: 0; }
.apps .active { background: #f3f2f2; }
.pr { font-weight: 700; color: #d9a3f5; background: #2f0b47; border: 2px solid #b56fd8; text-align: center; }
.tray, .weather { display: flex; align-items: center; }
.notes { position: relative; }
.notes span { position: absolute; border: 1px solid #666; border-radius: 50%; background: #ddd; text-align: center; }
.tray time { text-align: center; white-space: nowrap; }

.inner { height: 30px; background: #dad8d9; }
.inner .apps { width: 602px; grid-template-columns: repeat(16, 1fr); }
.inner .apps svg { width: 18px; height: 18px; }
.inner .apps button:nth-child(-n+4) svg { width: 15px; height: 15px; }
.inner .pr { width: 17px; height: 17px; line-height: 13px; }
.inner .tray { gap: 6px; padding-right: 15px; }
.inner .weather { font-size: 10px; gap: 6px; margin-right: 3px; }
.inner .weather svg { width: 17px; height: 17px; }
.inner .weather span + span { margin-left: 1px; }
.inner .ti { width: 13px; height: 13px; }
.inner time { line-height: 14px; margin: 0 8px 0 0; }
.inner .notes svg { width: 15px; height: 15px; }
.inner .notes span { left: 6px; top: 6px; width: 11px; height: 11px; line-height: 9px; font-size: 8px; }

.outer { height: 37px; background: #d6d6d6; }
.outer .apps { grid-template-columns: repeat(4, 45px) repeat(13, 46px); }
.outer .apps svg { width: 23px; height: 23px; }
.outer .apps button:nth-child(-n+4) svg { width: 18px; height: 18px; }
.outer .pr { width: 21px; height: 21px; line-height: 17px; }
.outer .tray { gap: 7px; padding-right: 20px; }
.outer .weather { font-size: 13px; gap: 6px; margin-right: 8px; }
.outer .weather svg { width: 24px; height: 23px; }
.outer .ti { width: 15px; height: 15px; }
.outer time { font-size: 11px; line-height: 17px; margin: 0 8px 0 0; }
.outer .notes svg { width: 19px; height: 19px; }
.outer .notes span { left: 7px; top: 7px; width: 15px; height: 15px; line-height: 13px; font-size: 10px; }

/* transport */
.player { background: #f0f0f0; }
.seek { display: flex; align-items: center; gap: 15px; height: 18px; padding: 0 7px 0 8px; font-size: 10px; }
.seek input { flex: 1; height: 8px; appearance: none; border-radius: 3px; background: linear-gradient(90deg, #2a78c6 71%, #cfcfcf 71%); }
.seek span { min-width: 27px; }
.seek .left { min-width: 32px; text-align: right; }
input[type="range"]::-webkit-slider-thumb { appearance: none; width: 1px; height: 8px; opacity: 0; }
.controls { display: flex; align-items: center; gap: 13px; height: 32px; padding: 0 2px 2px 4px; }
.controls button { display: flex; align-items: center; justify-content: center; width: 22px; height: 22px; background: #e4e4e4; border: 1px solid #b4b4b4; }
.controls button svg { width: 16px; height: 16px; }
.controls .play { width: 28px; height: 28px; }
.group { display: flex; gap: 3px; }
.volume { margin-left: auto; display: flex; align-items: flex-end; gap: 5px; padding-top: 6px; }
.vol-icon { width: 14px; height: 14px; }
.vol-meter { position: relative; width: 75px; height: 22px; }
.vol-meter input { display: block; width: 75px; height: 22px; appearance: none; clip-path: polygon(0 92%, 100% 0, 100% 100%, 0 100%); background: linear-gradient(90deg, #c4dcc4, #1fca22 70%, #1fca22 76%, #f3cf25 84%, #f08a1e 91%, #e52f1c); }
.vol-meter label { position: absolute; left: 5px; top: 0; font-size: 9px; line-height: 12px; color: #777; }
.vol-edge { position: absolute; left: 0; top: 0; width: 75px; height: 22px; pointer-events: none; }
```
